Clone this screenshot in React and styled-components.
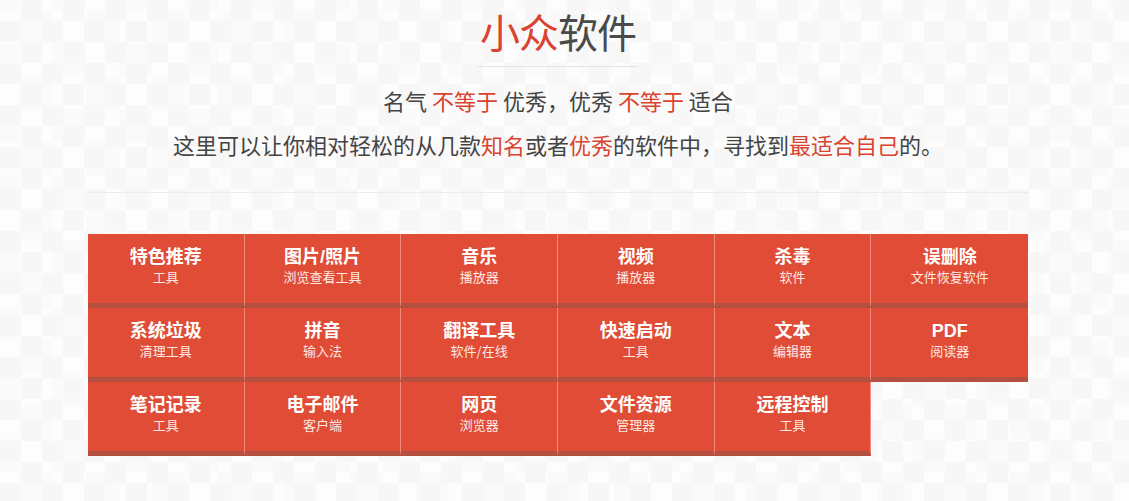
import React from 'react';
import styled, { createGlobalStyle } from 'styled-components';

const GlobalStyle = createGlobalStyle`
	html, body {
		margin: 0;
		padding: 0;
	}
	body {
		font-family: "Noto Sans CJK SC", "Noto Sans", "Liberation Sans", sans-serif;
		color: #444;
		background-color: #fdfdfd;
		background-image:
			conic-gradient(#f7f7f7 25%, transparent 0 50%, #f7f7f7 0 75%, transparent 0),
			conic-gradient(transparent 25%, #fafafa 0 50%, transparent 0 75%, #fafafa 0);
		background-size: 42px 42px, 66px 66px;
		background-position: 0 0, 20px 10px;
	}
`;

const Page = styled.div`
	width: 1116px;
	min-height: 501px;
	display: flex;
	flex-direction: column;
	align-items: center;
`;

const Title = styled.h1`
	margin: 6px 0 0;
	font-size: 40px;
	font-weight: 400;
	line-height: 50px;
	color: #4a4a4a;
	letter-spacing: -1px;
`;

const Red = styled.span`
	color: #d9432f;
`;

const TitleLine = styled.div`
	width: 160px;
	height: 1px;
	background: #e4e4e4;
	margin-top: 10px;
`;

const Slogan = styled.p`
	margin: 18px 0 0;
	font-size: 22px;
	line-height: 30px;
	color: #444;
	white-space: pre;
`;

const Intro = styled.p`
	margin: 14px 0 0;
	font-size: 22px;
	line-height: 30px;
	color: #444;
`;

const Divider = styled.div`
	width: 940px;
	height: 1px;
	background: #ececec;
	margin-top: 33px;
`;

const Grid = styled.ul`
	list-style: none;
	margin: 41px 0 0;
	padding: 0;
	width: 940px;
	display: grid;
	grid-template-columns: repeat(6, 1fr);
`;

const Tile = styled.li`
	height: 69px;
	background: #e04c35;
	border-bottom: 5px solid #b4503f;
	border-right: 1px solid #f08c78;
	box-sizing: content-box;
	display: flex;
	flex-direction: column;
	align-items: center;
	cursor: pointer;
	color: #fff;
	&:nth-child(6n) {
		border-right: none;
	}
`;

const Name = styled.span`
	margin-top: 12px;
	font-size: 18px;
	font-weight: 700;
	line-height: 22px;
	font-family: "Liberation Sans", "Noto Sans CJK SC", sans-serif;
`;

const Sub = styled.span`
	font-size: 13px;
	line-height: 18px;
	color: #fde9e4;
`;

const items = [
	['特色推荐', '工具'],
	['图片/照片', '浏览查看工具'],
	['音乐', '播放器'],
	['视频', '播放器'],
	['杀毒', '软件'],
	['误删除', '文件恢复软件'],
	['系统垃圾', '清理工具'],
	['拼音', '输入法'],
	['翻译工具', '软件/在线'],
	['快速启动', '工具'],
	['文本', '编辑器'],
	['PDF', '阅读器'],
	['笔记记录', '工具'],
	['电子邮件', '客户端'],
	['网页', '浏览器'],
	['文件资源', '管理器'],
	['远程控制', '工具'],
];

const App = () => (
	<>
		<GlobalStyle />
		<Page>
			<Title>
				<Red>小众</Red>软件
			</Title>
			<TitleLine />
			<Slogan>
				名气 <Red>不等于</Red> 优秀，优秀 <Red>不等于</Red> 适合
			</Slogan>
			<Intro>
				这里可以让你相对轻松的从几款<Red>知名</Red>或者<Red>优秀</Red>的软件中，寻找到<Red>最适合自己</Red>的。
			</Intro>
			<Divider />
			<Grid>
				{items.map(([name, sub]) => (
					<Tile key={name}>
						<Name>{name}</Name>
						<Sub>{sub}</Sub>
					</Tile>
				))}
			</Grid>
		</Page>
	</>
);

export default App;
